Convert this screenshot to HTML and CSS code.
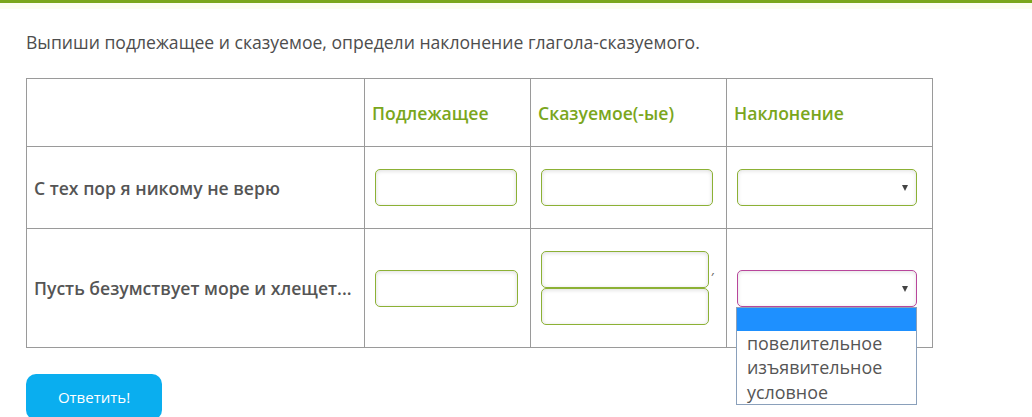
FILE: index.html
```html
<!DOCTYPE html>
<html lang="ru">
<head>
<meta charset="utf-8">
<title>Задание</title>
<link rel="stylesheet" href="styles.css">
</head>
<body>
<div class="topbar"></div>
<main class="content">
  <p class="task">Выпиши подлежащее и сказуемое, определи наклонение глагола-сказуемого.</p>
  <table class="grid">
    <colgroup>
      <col class="c1"><col class="c2"><col class="c3"><col class="c4">
    </colgroup>
    <tr class="head">
      <th></th>
      <th>Подлежащее</th>
      <th>Сказуемое(-ые)</th>
      <th>Наклонение</th>
    </tr>
    <tr class="r1">
      <td class="label">С тех пор я никому не верю</td>
      <td><div class="field w-subj"></div></td>
      <td><div class="field w-pred"></div></td>
      <td><div class="select"><span class="arrow"></span></div></td>
    </tr>
    <tr class="r2">
      <td class="label">Пусть безумствует море и хлещет...</td>
      <td><div class="field w-subj2"></div></td>
      <td>
        <div class="multi">
          <div class="stack">
            <div class="field w-pred2"></div>
            <div class="field w-pred2"></div>
          </div>
          <span class="comma">,</span>
        </div>
      </td>
      <td>
        <div class="select-wrap">
          <div class="select focus"><span class="arrow"></span></div>
          <ul class="dropdown">
            <li class="opt active"></li>
            <li class="opt">повелительное</li>
            <li class="opt">изъявительное</li>
            <li class="opt">условное</li>
          </ul>
        </div>
      </td>
    </tr>
  </table>
  <button class="submit" type="button">Ответить!</button>
</main>
</body>
</html>
```
FILE: styles.css
```css
html, body {
  margin: 0;
  padding: 0;
  background: #fff;
  font-family: "Open Sans", "Noto Sans", sans-serif;
}

.topbar {
  height: 3px;
  background: #7aa61c;
  border-bottom: 6px solid #fcfdf0;
}

.content {
  padding: 21px 0 0 26px;
}

.task {
  margin: 0;
  font-size: 17.6px;
  line-height: 24px;
  color: #4d4d4d;
}

.grid {
  margin-top: 24px;
  border-collapse: collapse;
  table-layout: fixed;
  width: 906px;
}

.c1 { width: 338px; }
.c2 { width: 166px; }
.c3 { width: 196px; }
.c4 { width: 206px; }

.grid th,
.grid td {
  border: 1px solid #9a9a9a;
  padding: 0 0 0 7px;
  vertical-align: middle;
  text-align: left;
}

.grid .head { height: 68px; }
.grid .r1 { height: 82px; }
.grid .r2 { height: 119px; }

.grid th {
  color: #7aa61c;
  font-size: 17.6px;
  font-weight: 600;
}

.grid td.label {
  color: #555;
  font-size: 17.6px;
  font-weight: 600;
}

.grid td:not(.label) {
  padding-left: 10px;
}

.field {
  box-sizing: border-box;
  height: 37px;
  border: 1px solid #8cb135;
  border-radius: 5px;
  background: #fff;
  box-shadow: inset 0 1px 4px rgba(0, 0, 0, 0.14);
}

.w-subj { width: 142px; }
.w-subj2 { width: 143px; }
.w-pred { width: 172px; }
.w-pred2 { width: 168px; }

.multi {
  display: flex;
  align-items: flex-start;
}

.stack {
  display: flex;
  flex-direction: column;
}

.comma {
  margin: 9px 0 0 3px;
  font-size: 13px;
  font-style: italic;
  color: #666;
  line-height: 18px;
}

.select {
  box-sizing: border-box;
  position: relative;
  width: 180px;
  height: 37px;
  border: 1px solid #8cb135;
  border-radius: 5px;
  background: #fff;
  box-shadow: inset 0 1px 4px rgba(0, 0, 0, 0.12);
}

.select.focus {
  border-color: #b8469b;
}

.arrow {
  position: absolute;
  right: 8px;
  top: 15px;
  width: 0;
  height: 0;
  border-left: 3px solid transparent;
  border-right: 3px solid transparent;
  border-top: 6px solid #444;
}

.select-wrap {
  position: relative;
  width: 180px;
}

.dropdown {
  position: absolute;
  left: -1px;
  top: 37px;
  width: 181px;
  margin: 0;
  padding: 0;
  list-style: none;
  box-sizing: border-box;
  border: 1px solid #8aa0bb;
  background: #fff;
  z-index: 5;
}

.opt {
  height: 24.5px;
  line-height: 24.5px;
  padding-left: 10px;
  font-size: 17.9px;
  color: #555;
}

.opt.active {
  height: 23px;
  background: #1e90ff;
}

.submit {
  display: block;
  margin-top: 26px;
  width: 136px;
  height: 46px;
  border: none;
  border-radius: 10px;
  background: #0aaeef;
  color: #fff;
  font-family: "Open Sans", "Noto Sans", sans-serif;
  font-size: 15px;
  font-weight: 400;
  padding: 0;
}
```
